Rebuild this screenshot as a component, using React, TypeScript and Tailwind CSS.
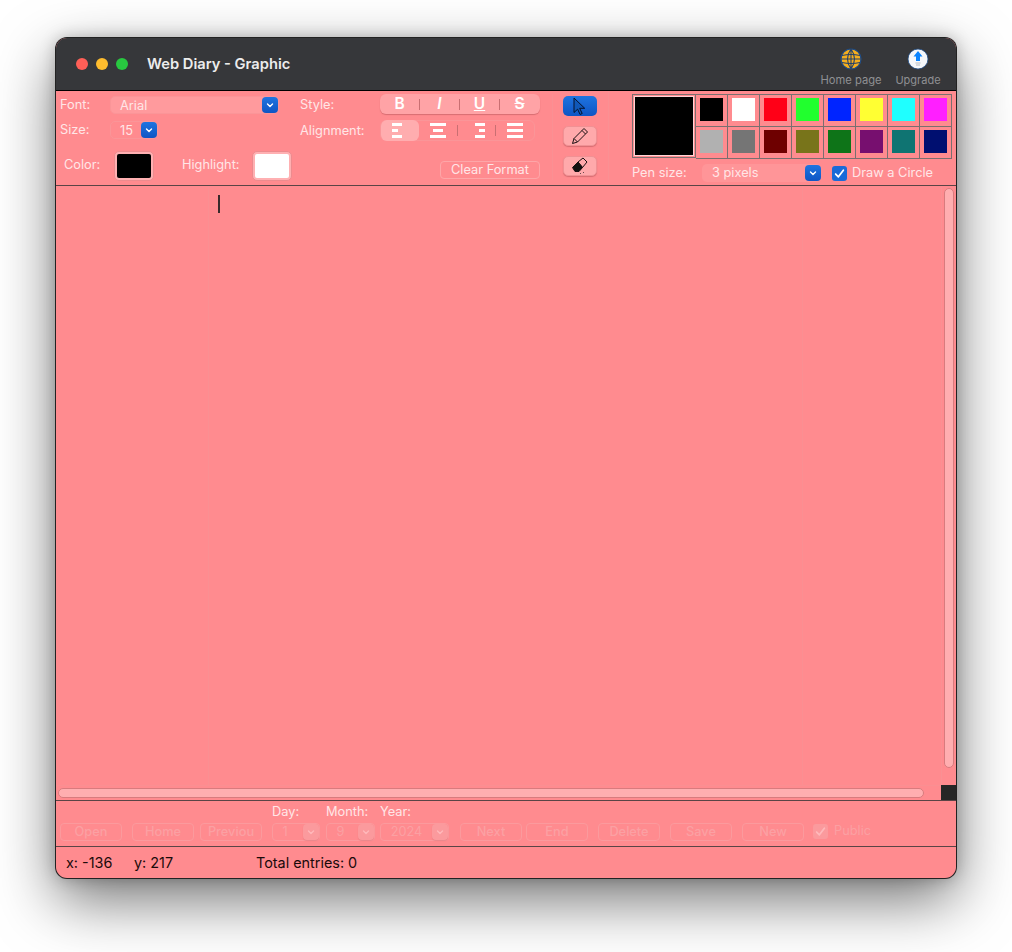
const Chevron = ({ c = "white" }: { c?: string }) => (
  <svg width="10" height="10" viewBox="0 0 10 10" fill="none"><path d="M2.500 4l2.500 2.500L7.500 4" stroke={c} strokeWidth="1.400" strokeLinecap="round" strokeLinejoin="round" /></svg>
);

const BlueCap = () => (
  <span className="flex items-center justify-center w-[16px] h-[16px] rounded-[4px] bg-gradient-to-b from-[#1f74e0] to-[#0f55c4]"><Chevron /></span>
);

const Sep = () => <span className="w-px h-[11px] bg-[#c96f72] shrink-0" />;

const AlignIcon = ({ rows }: { rows: string[] }) => (
  <span className="flex flex-col gap-[3px] w-[16px]">
    {rows.map((r, i) => <span key={i} className={"h-[3px] bg-white " + r} />)}
  </span>
);

const DisabledBtn = ({ t }: { t: string }) => (
  <span className="flex items-center justify-center w-[62px] h-[18px] rounded-[4px] border border-[#fb9a9d] text-[12.800px] font-medium text-[#fba0a3] overflow-hidden">{t}</span>
);

const DisabledSelect = ({ t, w, pr }: { t: string; w: string; pr: string }) => (
  <span className={"flex items-center justify-between h-[18px] rounded-[4px] border border-[#fb9a9d] text-[12.800px] text-[#fba0a3] " + w}>
    <span className={"flex-1 text-center " + pr}>{t}</span>
    <span className="flex items-center justify-center w-[16px] h-[16px] rounded-[4px] bg-[#fb9a9d] shadow-[0_1px_1px_rgba(200,100,105,0.35)]"><Chevron c="#ffb8ba" /></span>
  </span>
);

const row1 = ["#000000", "#ffffff", "#ff0017", "#21ff2e", "#0024ff", "#ffff33", "#1fffff", "#ff1fff"];
const row2 = ["#b1b1b1", "#757575", "#6e0000", "#78741a", "#0e7418", "#770f6f", "#0f7472", "#000f70"];

const Swatch = ({ c }: { c: string }) => (
  <span className="flex items-center justify-center w-[32px] h-[32px] border-r border-b border-[#7a6f70]">
    <span className="block w-[23px] h-[23px] mb-[2px]" style={{ background: c }} />
  </span>
);

const toolBtn = "flex items-center justify-center w-[34px] h-[20px] rounded-[5px] bg-[#ffa9ab] border border-[#f09194] shadow-[0_1px_1px_rgba(190,90,95,0.6)]";

export default function App() {
  return (
    <div className="w-[1012px] h-[952px] bg-white pt-[38px] pl-[56px] font-['Inter','Liberation_Sans',sans-serif] overflow-hidden">
      <div className="w-[900px] h-[840px] flex flex-col rounded-[11px] overflow-hidden bg-[#ff8b8f] ring-1 ring-[#222] shadow-[0_22px_60px_rgba(0,0,0,0.55),0_0_16px_rgba(0,0,0,0.25)]">
        {/* Title bar */}
        <div className="h-[53px] shrink-0 bg-[#36373a] border-b border-black flex items-start">
          <div className="flex items-center gap-[8px] pl-[20px] pt-[20px]">
            <span className="w-[12px] h-[12px] rounded-full bg-[#ff5f57]" />
            <span className="w-[12px] h-[12px] rounded-full bg-[#febc2e]" />
            <span className="w-[12px] h-[12px] rounded-full bg-[#28c840]" />
          </div>
          <div className="ml-[19px] mt-[16px] text-[14.700px] leading-[20px] font-semibold text-[#ececec]">Web Diary - Graphic</div>
          <div className="flex-1" />
          <div className="flex flex-col items-center w-[60px] mt-[10px] mr-[14px]">
            <svg width="22" height="22" viewBox="0 0 22 22">
              <circle cx="11" cy="11" r="10" fill="#f5ae1d" stroke="#1f4c86" strokeWidth="1.200" />
              <path d="M2 7.500Q11 5.500 20 7.500M1 11h20M2 14.500Q11 16.500 20 14.500" stroke="#23406b" strokeWidth="1.100" fill="none" />
              <path d="M11 1v20M11 1Q4 11 11 21M11 1Q18 11 11 21" stroke="#23406b" strokeWidth="1.100" fill="none" />
            </svg>
            <span className="text-[11.200px] leading-[14px] mt-[3px] whitespace-nowrap text-[#8f9093]">Home page</span>
          </div>
          <div className="flex flex-col items-center w-[46px] mt-[10px] mr-[15px]">
            <svg width="22" height="22" viewBox="0 0 22 22">
              <circle cx="11" cy="11" r="10" fill="#f5f7fa" stroke="#1f4c86" strokeWidth="0.800" />
              <path d="M11 3l4.500 5.500H13V13H9V8.500H6.500z" fill="#0a84ff" />
              <path d="M8.500 15h5M9 17h4" stroke="#b5b9c0" strokeWidth="1.200" />
            </svg>
            <span className="text-[11px] leading-[14px] mt-[3px] whitespace-nowrap text-[#8f9093]">Upgrade</span>
          </div>
        </div>

        {/* Toolbar */}
        <div className="h-[95px] shrink-0 flex border-b border-[#5a4446] text-[12.800px] text-[#ffe6e7]">
          {/* fonts */}
          <div className="w-[244px] shrink-0 flex flex-col pl-[4px] pt-[5px]">
            <div className="flex items-center h-[18px]">
              <span className="w-[50px]">Font:</span>
              <span className="flex items-center justify-between w-[169px] h-[18px] rounded-[5px] bg-[#ff9a9d] border border-[#fa9598]">
                <span className="pl-[9px] pt-[1px]">Arial</span><BlueCap />
              </span>
            </div>
            <div className="flex items-center h-[18px] mt-[7px]">
              <span className="w-[50px]">Size:</span>
              <span className="flex items-center justify-between w-[48px] h-[18px] rounded-[5px] border border-[#fa9598]">
                <span className="pl-[9px] pt-[1px]">15</span><BlueCap />
              </span>
            </div>
            <div className="flex items-center h-[31px] mt-[11px] pl-[4px]">
              <span className="w-[50px] pb-[2px]">Color:</span>
              <span className="flex items-center justify-center w-[40px] h-[30px] rounded-[5px] bg-[#ffb0b2] border border-[#ec8b8e]">
                <span className="block w-[34px] h-[24px] rounded-[2px] bg-black" />
              </span>
              <span className="ml-[28px] w-[70px] pb-[2px]">Highlight:</span>
              <span className="flex items-center justify-center w-[40px] h-[30px] rounded-[5px] bg-[#ffb0b2] border border-[#ec8b8e]">
                <span className="block w-[34px] h-[24px] rounded-[2px] bg-white" />
              </span>
            </div>
          </div>

          {/* style */}
          <div className="w-[253px] shrink-0 flex flex-col border-r border-[#fa9093] mb-[5px] mt-[3px]">
            <div className="flex items-center h-[20px]">
              <span className="w-[80px] pt-[1px]">Style:</span>
              <span className="flex items-center w-[160px] h-[20px] rounded-[6px] bg-[#ffa3a6] shadow-[0_1px_1px_rgba(190,90,95,0.6)] text-white text-[15.500px] font-semibold">
                <span className="w-[39px] text-center">B</span><Sep />
                <span className="w-[39px] text-center italic">I</span><Sep />
                <span className="w-[39px] text-center underline">U</span><Sep />
                <span className="w-[39px] text-center line-through">S</span>
              </span>
            </div>
            <div className="flex items-center h-[21px] mt-[6px]">
              <span className="w-[80px] pt-[1px]">Alignment:</span>
              <span className="flex items-center w-[155px] h-[21px] rounded-[6px] border border-[#fa9598]">
                <span className="flex items-center justify-center w-[38px] h-[21px] rounded-[6px] bg-[#ffadaf]">
                  <AlignIcon rows={["w-[10px]", "w-[6px]", "w-[10px]"]} />
                </span>
                <span className="flex items-center justify-center w-[39px]"><AlignIcon rows={["w-[16px]", "w-[10px] mx-auto", "w-[16px]"]} /></span>
                <Sep />
                <span className="flex items-center justify-center w-[38px]"><AlignIcon rows={["w-[10px] ml-auto", "w-[6px] ml-auto", "w-[10px] ml-auto"]} /></span>
                <Sep />
                <span className="flex items-center justify-center w-[38px]"><AlignIcon rows={["w-[16px]", "w-[16px]", "w-[16px]"]} /></span>
              </span>
            </div>
            <div className="flex justify-end pr-[12px] mt-[20px]">
              <span className="flex items-center justify-center w-[100px] h-[18px] rounded-[4px] border border-[#fda6a8]">Clear Format</span>
            </div>
          </div>

          {/* tools */}
          <div className="w-[56px] shrink-0 flex flex-col items-center gap-[10px] border-r border-[#fa9093] mb-[5px] pt-[5px] pr-[2px]">
            <span className="flex items-center justify-center w-[34px] h-[20px] rounded-[5px] bg-gradient-to-b from-[#1f74e0] to-[#0f55c4]">
              <svg width="15" height="19" viewBox="0 0 15 19"><path d="M2 1v14.500l3.600-3.300 2.500 5.300 2.100-1-2.500-5.200h5z" fill="#1058b8" stroke="#06122c" strokeWidth="1" strokeLinejoin="round" /></svg>
            </span>
            <span className={toolBtn}>
              <svg width="18" height="18" viewBox="0 0 18 18" fill="none" stroke="#1a1012" strokeWidth="1"><path d="M1.500 16.500l1.500-5L13 1.500l3.500 3.500-10 10z" strokeLinejoin="round" /><path d="M11 3.500l3.500 3.500M3 11.500l3.500 3.500" /></svg>
            </span>
            <span className={toolBtn}>
              <svg width="18" height="18" viewBox="0 0 18 18" stroke="#1a1012" strokeWidth="1"><path d="M7 5l5-4 4 4-4.500 5.500z" fill="none" strokeLinejoin="round" /><path d="M1.500 10.500L7 5l4.500 5.500-3.500 4H4z" fill="#111" strokeLinejoin="round" /><path d="M9 16.500h1M12 15.500h1" stroke="#6b4a4c" /></svg>
            </span>
          </div>

          {/* palette */}
          <div className="flex-1 flex flex-col pl-[23px] pt-[3px]">
            <div className="flex">
              <span className="flex items-center justify-center w-[64px] h-[64px] border border-[#7a6f70]">
                <span className="block w-[60px] h-[60px] bg-black border border-[#ffd5d6]" />
              </span>
              <div className="flex flex-col border-t border-[#7a6f70]">
                <div className="flex">{row1.map((c) => <Swatch key={c} c={c} />)}</div>
                <div className="flex">{row2.map((c) => <Swatch key={c} c={c} />)}</div>
              </div>
            </div>
            <div className="flex items-center h-[18px] mt-[5px]">
              <span className="w-[70px]">Pen size:</span>
              <span className="flex items-center justify-between w-[119px] h-[18px] rounded-[5px] bg-[#ff9598]">
                <span className="pl-[10px]">3 pixels</span><BlueCap />
              </span>
              <span className="flex items-center justify-center w-[15px] h-[15px] ml-[11px] rounded-[3px] bg-[#1a6ad8]">
                <svg width="11" height="11" viewBox="0 0 10 10" fill="none"><path d="M1.500 5.500l2.500 2.500 4.500-6" stroke="white" strokeWidth="1.600" strokeLinecap="round" strokeLinejoin="round" /></svg>
              </span>
              <span className="ml-[5px]">Draw a Circle</span>
            </div>
          </div>
        </div>

        {/* Canvas */}
        <div className="h-[614px] shrink-0 flex">
          <div className="flex-1 flex flex-col">
            <div className="flex-1 flex">
              <div className="w-[153px] border-r border-[#fa8f92] shrink-0" />
              <div className="w-[594px] border-r border-[#fa8f92] shrink-0 pl-[9px] pt-[9px]"><span className="block w-[2px] h-[18px] bg-[#3a2a2b]" /></div>
            </div>
            <div className="h-[15px] flex items-center pl-[2px] border-t border-[#fa8f92]">
              <span className="block w-[866px] h-[10px] rounded-full bg-[#ffaeb0] border border-[#d87b7e]" />
            </div>
          </div>
          <div className="w-[15px] flex flex-col">
            <div className="flex-1 border-l border-[#fa9093] pt-[2px] pl-[2px]">
              <span className="block w-[10px] h-[580px] rounded-full bg-[#ffaeb0] border border-[#d87b7e]" />
            </div>
            <span className="block w-[15px] h-[15px] bg-[#262626]" />
          </div>
        </div>

        {/* Bottom bar */}
        <div className="h-[47px] shrink-0 border-t border-b border-[#5a4446] flex flex-col">
          <div className="flex h-[19px] items-end text-[12.800px] leading-[16px] text-[#ffe6e7] pl-[216px]">
            <span className="w-[54px]">Day:</span>
            <span className="w-[54px]">Month:</span>
            <span>Year:</span>
          </div>
          <div className="flex items-center h-[18px] mt-[3px] pl-[4px]">
            <DisabledBtn t="Open" />
            <span className="w-[10px]" />
            <DisabledBtn t="Home" />
            <span className="w-[6px]" />
            <DisabledBtn t="Previou" />
            <span className="w-[10px]" />
            <DisabledSelect t="1" w="w-[48px]" pr="pr-[6px]" />
            <span className="w-[6px]" />
            <DisabledSelect t="9" w="w-[49px]" pr="pr-[4px]" />
            <span className="w-[5px]" />
            <DisabledSelect t="2024" w="w-[69px]" pr="" />
            <span className="w-[11px]" />
            <DisabledBtn t="Next" />
            <span className="w-[4px]" />
            <DisabledBtn t="End" />
            <span className="w-[10px]" />
            <DisabledBtn t="Delete" />
            <span className="w-[10px]" />
            <DisabledBtn t="Save" />
            <span className="w-[10px]" />
            <DisabledBtn t="New" />
            <span className="flex items-center justify-center w-[15px] h-[15px] ml-[9px] mb-[2px] rounded-[3px] bg-[#fb9a9d]">
              <svg width="11" height="11" viewBox="0 0 10 10" fill="none"><path d="M1.500 5.500l2.500 2.500 4.500-6" stroke="#ffb8ba" strokeWidth="1.600" strokeLinecap="round" strokeLinejoin="round" /></svg>
            </span>
            <span className="ml-[6px] mb-[2px] text-[12.800px] text-[#fba0a3]">Public</span>
          </div>
        </div>

        {/* Status */}
        <div className="flex-1 flex items-center text-[14.400px] text-[#1a0a0a] pl-[10px]">
          <span className="w-[68px]">x: -136</span>
          <span className="w-[122px]">y: 217</span>
          <span>Total entries: 0</span>
        </div>
      </div>
    </div>
  );
}
